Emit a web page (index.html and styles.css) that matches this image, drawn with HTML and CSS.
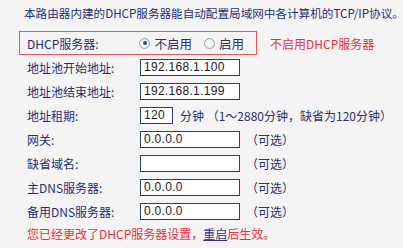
FILE: index.html
```html
<!DOCTYPE html>
<html lang="zh-CN">
<head>
<meta charset="utf-8">
<link rel="stylesheet" href="styles.css">
</head>
<body>
<div class="page">
  <p class="intro">本路由器内建的DHCP服务器能自动配置局域网中各计算机的TCP/IP协议。</p>
  <div class="dhcp-line">
    <div class="dhcp-box">
      <span class="box-label">DHCP服务器:</span>
      <label class="radio"><span class="dot on"></span>不启用</label>
      <label class="radio"><span class="dot"></span>启用</label>
    </div>
    <span class="note">不启用DHCP服务器</span>
  </div>
  <div class="row"><span class="label">地址池开始地址:</span><span class="field">192.168.1.100</span></div>
  <div class="row"><span class="label">地址池结束地址:</span><span class="field">192.168.1.199</span></div>
  <div class="row"><span class="label">地址租期:</span><span class="field short">120</span><span class="hint">分钟 （1～2880分钟，缺省为120分钟）</span></div>
  <div class="row"><span class="label">网关:</span><span class="field">0.0.0.0</span><span class="hint opt">（可选）</span></div>
  <div class="row"><span class="label">缺省域名:</span><span class="field"></span><span class="hint opt">（可选）</span></div>
  <div class="row"><span class="label">主DNS服务器:</span><span class="field">0.0.0.0</span><span class="hint opt">（可选）</span></div>
  <div class="row"><span class="label">备用DNS服务器:</span><span class="field">0.0.0.0</span><span class="hint opt">（可选）</span></div>
  <p class="warn">您已经更改了DHCP服务器设置，<a class="reboot">重启</a>后生效。</p>
</div>
</body>
</html>
```
FILE: styles.css
```css
html, body {
  margin: 0;
  padding: 0;
  background: #f4f4f4;
}
body {
  font-family: "Noto Sans CJK SC", "Noto Sans", sans-serif;
  font-size: 12px;
  color: #1f2f74;
  width: 403px;
  height: 248px;
  overflow: hidden;
}
.page {
  padding-top: 5px;
}
.intro {
  margin: 0 0 0 24px;
  line-height: 16px;
  white-space: nowrap;
  font-size: 11.6px;
}
.dhcp-line {
  display: flex;
  align-items: center;
  margin: 10px 0 0 19px;
}
.dhcp-box {
  display: flex;
  align-items: center;
  border: 1px solid #e05a5a;
  padding-left: 7px;
  box-sizing: border-box;
  width: 238px;
  height: 24px;
}
.box-label {
  width: 118px;
  white-space: nowrap;
}
.radio {
  display: flex;
  align-items: center;
  white-space: nowrap;
  color: #2a2f6a;
  font-size: 12.5px;
  margin-right: 12px;
}
.dot {
  flex: none;
  box-sizing: border-box;
  width: 11px;
  height: 11px;
  border-radius: 50%;
  border: 1px solid #9aa0b0;
  background: radial-gradient(circle, #ffffff 0, #dfe2e9 100%);
  margin-right: 4px;
  position: relative;
}
.dot.on::after {
  content: "";
  position: absolute;
  left: 2.5px;
  top: 2.5px;
  width: 4px;
  height: 4px;
  border-radius: 50%;
  background: #2d4aa8;
}
.note {
  margin-left: 13px;
  color: #e8303a;
  font-size: 12px;
  white-space: nowrap;
}
.row {
  display: flex;
  align-items: center;
  height: 24px;
  padding-left: 27px;
  white-space: nowrap;
}
.label {
  width: 113px;
}
.field {
  box-sizing: border-box;
  width: 100px;
  height: 17px;
  border: 1px solid #2e3b8c;
  background: #ffffff;
  font-family: "Liberation Sans", Arial, sans-serif;
  font-size: 12px;
  line-height: 15px;
  padding-left: 3px;
  color: #222222;
  letter-spacing: 0.3px;
}
.field.short {
  width: 33px;
}
.hint {
  margin-left: 7px;
  color: #2a3070;
}
.hint.opt {
  margin-left: 6px;
}
.warn {
  margin: 3px 0 0 27px;
  color: #e8303a;
  line-height: 16px;
  white-space: nowrap;
}
.reboot {
  color: #3a2a8a;
  text-decoration: underline;
}
```
